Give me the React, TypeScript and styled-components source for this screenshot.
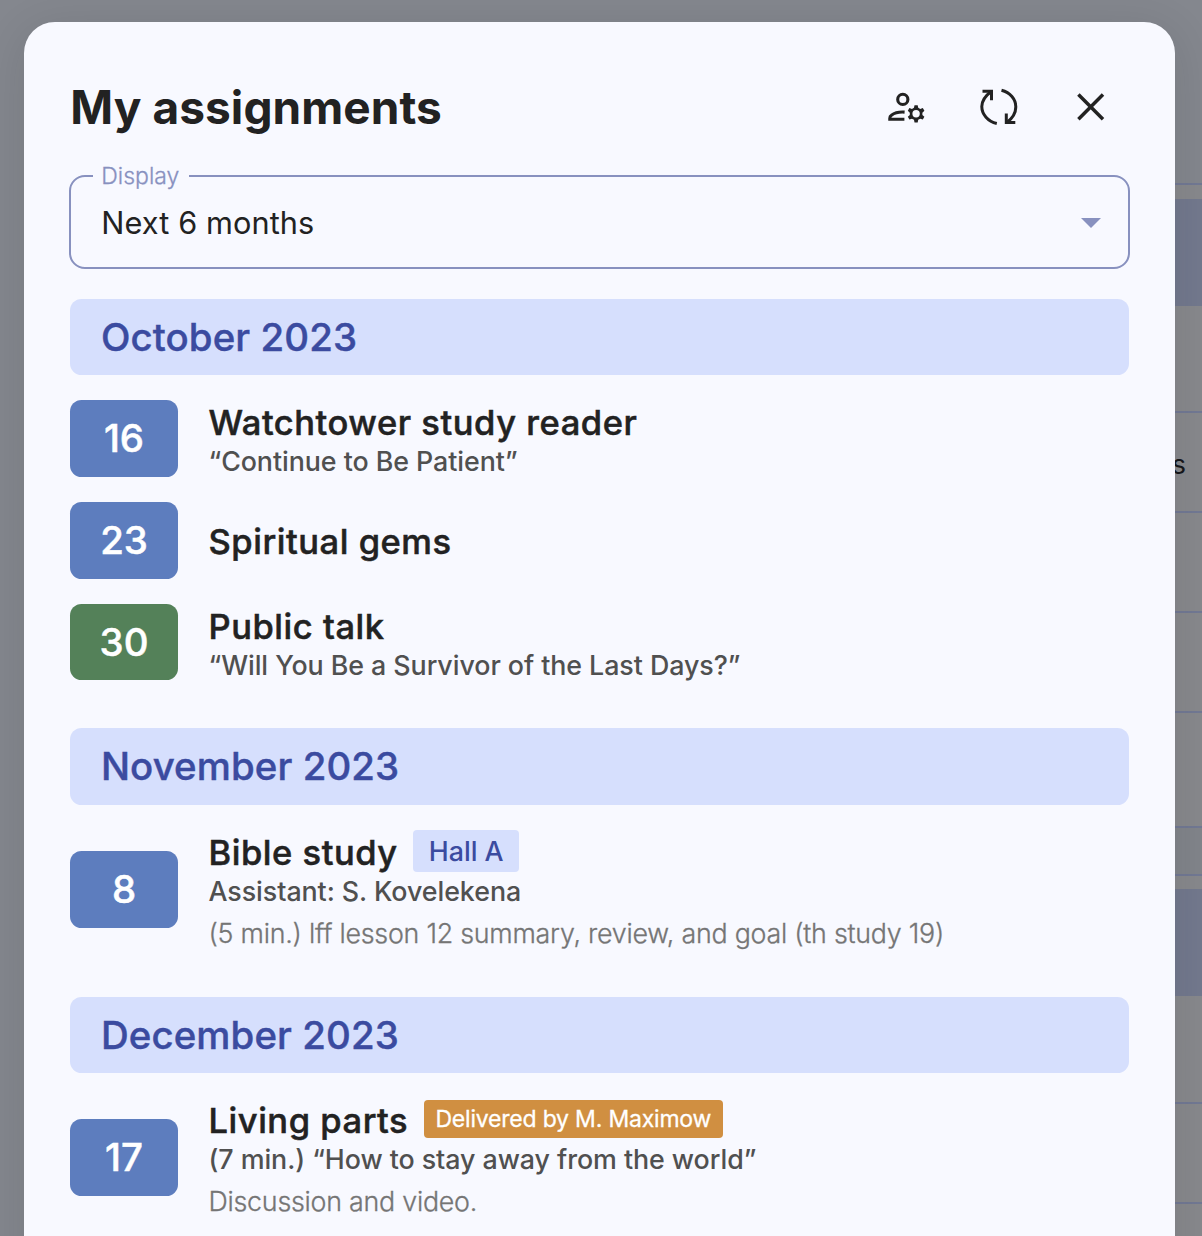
import React from "react";
import styled, { createGlobalStyle } from "styled-components";

const GlobalStyle = createGlobalStyle`
  * { box-sizing: border-box; }
  html, body { margin: 0; padding: 0; overflow: hidden; background: #84878e; }
  body { font-family: Inter, "Liberation Sans", sans-serif; color: #222222; }
`;

const Screen = styled.div`
  position: relative;
  width: 1202px;
  height: 1236px;
  overflow: hidden;
  background: #84878e;
`;

const Schedule = styled.div`
  display: flex;
  flex-direction: column;
  width: 602px;
  margin-left: 600px;
`;

const ScheduleLine = styled.div<{ $h: number; $bg?: string; $line?: boolean }>`
  display: flex;
  align-items: center;
  justify-content: flex-end;
  flex: none;
  height: ${(p) => p.$h}px;
  padding: 4px 16px 0 0;
  background: ${(p) => p.$bg ?? "#88898d"};
  border-bottom: ${(p) => (p.$line ? "2px solid #727994" : "none")};
  font-size: 27px;
  color: #15161a;
`;

const Overlay = styled.div`
  position: absolute;
  inset: 0;
  padding: 22px 0 0 24.3px;
`;

const Dialog = styled.section`
  display: flex;
  flex-direction: column;
  width: 1150.7px;
  height: 1400px;
  padding: 62px 46px 0;
  border-radius: 31px;
  background: #f8f9ff;
  box-shadow: 0 8px 46px rgba(28, 28, 28, 0.12);
`;

const Header = styled.header`
  display: flex;
  align-items: center;
  justify-content: space-between;
  height: 46px;
  padding-right: 15.3px;
`;

const Title = styled.h1`
  margin: 0;
  font-size: 46px;
  line-height: 46px;
  font-weight: 700;
  letter-spacing: 0.07px;
  white-space: nowrap;
`;

const Actions = styled.div`
  display: flex;
  gap: 46px;
`;

const Icon = styled.svg`
  display: block;
  width: 46px;
  height: 46px;
  fill: none;
  stroke: #222222;
`;

const Field = styled.fieldset`
  display: flex;
  justify-content: space-between;
  height: 106px;
  margin: 33px 0 0 -1px;
  padding: 10.5px 27px 0 30px;
  width: 1060.5px;
  min-width: 0;
  border: 2px solid #8891bf;
  border-radius: 16px;
`;

const Legend = styled.legend`
  margin-left: -8px;
  padding: 0 10px 0 8px;
  font-size: 23px;
  line-height: 26px;
  font-weight: 300;
  -webkit-text-stroke: 0.3px;
  color: #8891bf;
`;

const FieldValue = styled.span`
  font-size: 30.7px;
  line-height: 46px;
  font-weight: 400;
  letter-spacing: 0.1px;
`;

const Caret = styled.svg`
  margin-top: 18px;
  width: 20px;
  height: 10px;
  fill: #8891bf;
`;

const Months = styled.div`
  display: flex;
  flex-direction: column;
  gap: 48px;
  margin-top: 29.75px;
`;

const Month = styled.section`
  display: flex;
  flex-direction: column;
  gap: 24.9px;
`;

const MonthTitle = styled.h2`
  margin: 0;
  height: 76.7px;
  padding-left: 30.7px;
  border-radius: 11.5px;
  background: #d6dffd;
  color: #3b4ba0;
  font-size: 38.4px;
  line-height: 76.5px;
  font-weight: 500;
  letter-spacing: 0.1px;
  -webkit-text-stroke: 0.4px;
`;

const Item = styled.article`
  display: flex;
  align-items: center;
  gap: 30.8px;
  min-height: 76.7px;
`;

const DateBadge = styled.div<{ $green?: boolean }>`
  flex: none;
  width: 107.4px;
  height: 76.7px;
  border-radius: 11.5px;
  background: ${(p) => (p.$green ? "#548159" : "#5d7dbe")};
  color: #ffffff;
  font-size: 38.4px;
  line-height: 76px;
  font-weight: 500;
  -webkit-text-stroke: 0.5px;
  text-align: center;
`;

const Details = styled.div<{ $single?: boolean }>`
  display: flex;
  flex-direction: column;
  padding-top: ${(p) => (p.$single ? 3 : 0)}px;
`;

const Heading = styled.div`
  display: flex;
  align-items: center;
  height: 46px;
  gap: 15.7px;
`;

const ItemTitle = styled.h3`
  margin: 0;
  font-size: 34.5px;
  line-height: 46px;
  font-weight: 500;
  letter-spacing: 0.54px;
  -webkit-text-stroke: 0.5px;
`;

const Note = styled.p`
  margin: 0;
  font-size: 26.8px;
  line-height: 30.7px;
  font-weight: 500;
  letter-spacing: -0.05px;
  color: #505050;
`;

const Description = styled(Note)`
  margin-top: 11.5px;
  font-weight: 300;
  letter-spacing: -0.24px;
  -webkit-text-stroke: 0.3px;
  color: #757575;
`;

const HallTag = styled.span`
  height: 42px;
  padding: 0 15.3px;
  margin-top: -4px;
  border-radius: 4px;
  background: #d6dffd;
  color: #3b4ba0;
  font-size: 26.8px;
  line-height: 42px;
  font-weight: 500;
`;

const DeliveredTag = styled.span`
  height: 38.4px;
  padding: 0 11.5px;
  margin-top: -4px;
  border-radius: 4px;
  background: #d08f41;
  color: #ffffff;
  font-size: 23px;
  line-height: 38px;
  font-weight: 400;
  letter-spacing: -0.2px;
  -webkit-text-stroke: 0.3px;
`;

type Entry = {
  day: number;
  green?: boolean;
  title: string;
  hall?: string;
  delivered?: string;
  note?: string;
  description?: string;
};

const months: { name: string; entries: Entry[] }[] = [
  {
    name: "October 2023",
    entries: [
      { day: 16, title: "Watchtower study reader", note: "“Continue to Be Patient”" },
      { day: 23, title: "Spiritual gems" },
      { day: 30, green: true, title: "Public talk", note: "“Will You Be a Survivor of the Last Days?”" },
    ],
  },
  {
    name: "November 2023",
    entries: [
      {
        day: 8,
        title: "Bible study",
        hall: "Hall A",
        note: "Assistant: S. Kovelekena",
        description: "(5 min.) lff lesson 12 summary, review, and goal (th study 19)",
      },
    ],
  },
  {
    name: "December 2023",
    entries: [
      {
        day: 17,
        title: "Living parts",
        delivered: "Delivered by M. Maximow",
        note: "(7 min.) “How to stay away from the world”",
        description: "Discussion and video.",
      },
    ],
  },
];

const gearPath = (cx: number, cy: number) => {
  const pts: string[] = [];
  for (let i = 0; i < 6; i++) {
    const a = (i * Math.PI) / 3 - Math.PI / 2;
    const at = (r: number, d: number) =>
      `${(cx + r * Math.cos(a + d)).toFixed(2)} ${(cy + r * Math.sin(a + d)).toFixed(2)}`;
    pts.push(at(6.4, -0.34), at(8.8, -0.18), at(8.8, 0.18), at(6.4, 0.34));
  }
  return `M${pts.join("L")}Z`;
};

export default function App() {
  return (
    <>
      <GlobalStyle />
      <Screen>
        <Schedule>
          <ScheduleLine $h={185} $bg="#84878e" $line />
          <ScheduleLine $h={14} />
          <ScheduleLine $h={107} $bg="#73798e" />
          <ScheduleLine $h={107} $line />
          <ScheduleLine $h={100} $line>Congregation Bible study readers</ScheduleLine>
          <ScheduleLine $h={100} $line />
          <ScheduleLine $h={100} $line />
          <ScheduleLine $h={115} $line />
          <ScheduleLine $h={48} $bg="#82858b" $line />
          <ScheduleLine $h={13} />
          <ScheduleLine $h={107} $bg="#73798e" />
          <ScheduleLine $h={108} $line />
          <ScheduleLine $h={100} $line />
          <ScheduleLine $h={100} $line />
        </Schedule>
        <Overlay>
          <Dialog>
            <Header>
              <Title>My assignments</Title>
              <Actions>
                <Icon viewBox="0 0 46 46" strokeWidth="3.1">
                  <circle cx="18.8" cy="15.4" r="5.1" />
                  <path d="M20.6 28.1C15.1 27.7 10.1 29.2 7.4 31.2C6.2 32 5.8 33 5.8 34.2V35.3H20.4" />
                  <path
                    d={gearPath(32.1, 29.8) + "M35.8 29.8a3.7 3.7 0 1 0-7.4 0a3.7 3.7 0 1 0 7.4 0Z"}
                    fill="#222222"
                    fillRule="evenodd"
                    stroke="none"
                  />
                </Icon>
                <Icon viewBox="0 0 46 46" strokeWidth="3">
                  <path d="M20.8 39.5C12 37.5 5.8 30.5 5.8 22.6C5.8 17 9 12 15.5 7.2" />
                  <path d="M6.5 7.2H15.5V16.2" />
                  <path d="M25.5 6.3C34.2 8.5 39.8 15 39.8 22.8C39.8 29 37 34 30.8 38.5" />
                  <path d="M39.3 38.5H30.3V29.5" />
                </Icon>
                <Icon viewBox="0 0 46 46" strokeWidth="3.5">
                  <path d="M10.4 10.6L35 35.2M35 10.6L10.4 35.2" />
                </Icon>
              </Actions>
            </Header>
            <Field>
              <Legend>Display</Legend>
              <FieldValue>Next 6 months</FieldValue>
              <Caret viewBox="0 0 20 10">
                <path d="M0 0H20L10 10Z" />
              </Caret>
            </Field>
            <Months>
              {months.map((month) => (
                <Month key={month.name}>
                  <MonthTitle>{month.name}</MonthTitle>
                  {month.entries.map((entry) => (
                    <Item key={entry.day}>
                      <DateBadge $green={entry.green}>{entry.day}</DateBadge>
                      <Details $single={!entry.note}>
                        <Heading>
                          <ItemTitle>{entry.title}</ItemTitle>
                          {entry.hall && <HallTag>{entry.hall}</HallTag>}
                          {entry.delivered && <DeliveredTag>{entry.delivered}</DeliveredTag>}
                        </Heading>
                        {entry.note && <Note>{entry.note}</Note>}
                        {entry.description && <Description>{entry.description}</Description>}
                      </Details>
                    </Item>
                  ))}
                </Month>
              ))}
            </Months>
          </Dialog>
        </Overlay>
      </Screen>
    </>
  );
}
